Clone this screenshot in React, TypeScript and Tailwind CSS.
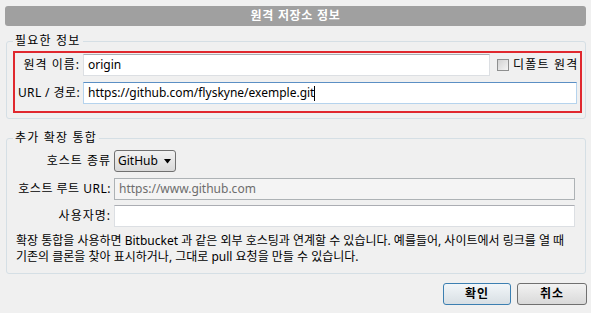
const font = { fontFamily: '"Noto Sans", "Noto Sans CJK KR", sans-serif' };

function TextBox({ value, w, focused, disabled }: { value?: string; w: string; focused?: boolean; disabled?: boolean }) {
  const base = 'h-[22px] border px-[4px] flex items-center text-[12px] leading-none';
  let look = 'bg-white border-[#dcdfe3] border-t-[#abadb3]';
  if (focused) look = 'bg-white border-[#b5d3ed] border-t-[#5b8fc4]';
  if (disabled) look = 'bg-[#f4f4f4] border-[#adb2b5] text-[#6d6d6d]';
  return (
    <div className={`${base} ${look} ${w}`}>
      <span>{value}</span>
      {focused && <span className="w-px h-[15px] bg-black" />}
    </div>
  );
}

export default function App() {
  return (
    <div className="w-[591px] h-[313px] bg-[#f0f0f0] px-[5px] pt-[6px] text-[12px] text-black overflow-hidden" style={font}>
      <div className="h-[20px] w-[581px] rounded-[3px] bg-[#a0a0a0] flex items-center justify-center text-white font-bold text-[12px] tracking-[0.7px]">
        원격 저장소 정보
      </div>

      <fieldset className="mt-[7px] ml-[1px] w-[580px] border border-[#d5dfe5] rounded-[3px] pl-[6px] pr-[3px] pb-[5px] pt-[2px]">
        <legend className="px-[2px] leading-[16px] tracking-[1.2px]">필요한 정보</legend>
        <div className="border-2 border-[#e0282e] pt-[1px] pb-[7px] pl-[1px]">
          <div className="flex items-center">
            <div className="w-[64px] text-right leading-none tracking-[1px]">원격 이름:</div>
            <div className="ml-[3px]"><TextBox value="origin" w="w-[407px]" /></div>
            <div className="ml-[7px] w-[12px] h-[12px] border border-[#8e8f8f] bg-gradient-to-br from-[#d2d2d2] to-[#f4f4f4]" />
            <div className="ml-[4px] leading-none tracking-[1.2px]">디폴트 원격</div>
          </div>
          <div className="flex items-center mt-[6px]">
            <div className="w-[64px] text-right leading-none tracking-[0.4px]">URL / 경로:</div>
            <div className="ml-[3px]"><TextBox value="https://github.com/flyskyne/exemple.git" w="w-[494px]" focused /></div>
          </div>
        </div>
      </fieldset>

      <fieldset className="mt-[11px] ml-[1px] w-[580px] border border-[#d5dfe5] rounded-[3px] pl-[6px] pr-[3px] pb-[8px] pt-[4px]">
        <legend className="px-[2px] leading-[16px] tracking-[1.2px]">추가 확장 통합</legend>
        <div className="flex items-center">
          <div className="w-[98px] text-right leading-none tracking-[1px]">호스트 종류</div>
          <div className="ml-[3px] h-[22px] w-[62px] rounded-[3px] border border-[#707070] bg-gradient-to-b from-[#f2f2f2] to-[#d9d9d9] flex items-center pl-[3px] gap-[6px]">
            <span className="leading-none">GitHub</span>
            <svg width="8" height="5" viewBox="0 0 8 5"><path d="M0 0h7L3.5 4.5z" fill="#000" /></svg>
          </div>
        </div>
        <div className="flex items-center mt-[6px]">
          <div className="w-[98px] text-right leading-none tracking-[0.5px]">호스트 루트 URL:</div>
          <div className="ml-[3px]"><TextBox value="https://www.github.com" w="w-[461px]" disabled /></div>
        </div>
        <div className="flex items-center mt-[5px]">
          <div className="w-[98px] text-right leading-none tracking-[1px]">사용자명:</div>
          <div className="ml-[3px]"><TextBox w="w-[461px]" /></div>
        </div>
        <p className="mt-[6px] ml-[3px] leading-[16px]">
          확장 통합을 사용하면 Bitbucket 과 같은 외부 호스팅과 연계할 수 있습니다. 예를들어, 사이트에서 링크를 열 때
          <br />
          기존의 클론을 찾아 표시하거나, 그대로 pull 요청을 만들 수 있습니다.
        </p>
      </fieldset>

      <div className="flex justify-end gap-[6px] mt-[9px] w-[582px]">
        <button className="h-[22px] w-[68px] rounded-[3px] border border-[#3c7fb1] bg-gradient-to-b from-[#f2f6f9] to-[#d8dfe4] font-semibold leading-none tracking-[1px]">
          확인
        </button>
        <button className="h-[22px] w-[70px] rounded-[3px] border border-[#707070] bg-gradient-to-b from-[#f2f2f2] to-[#d9d9d9] font-semibold leading-none tracking-[1px]">
          취소
        </button>
      </div>
    </div>
  );
}
